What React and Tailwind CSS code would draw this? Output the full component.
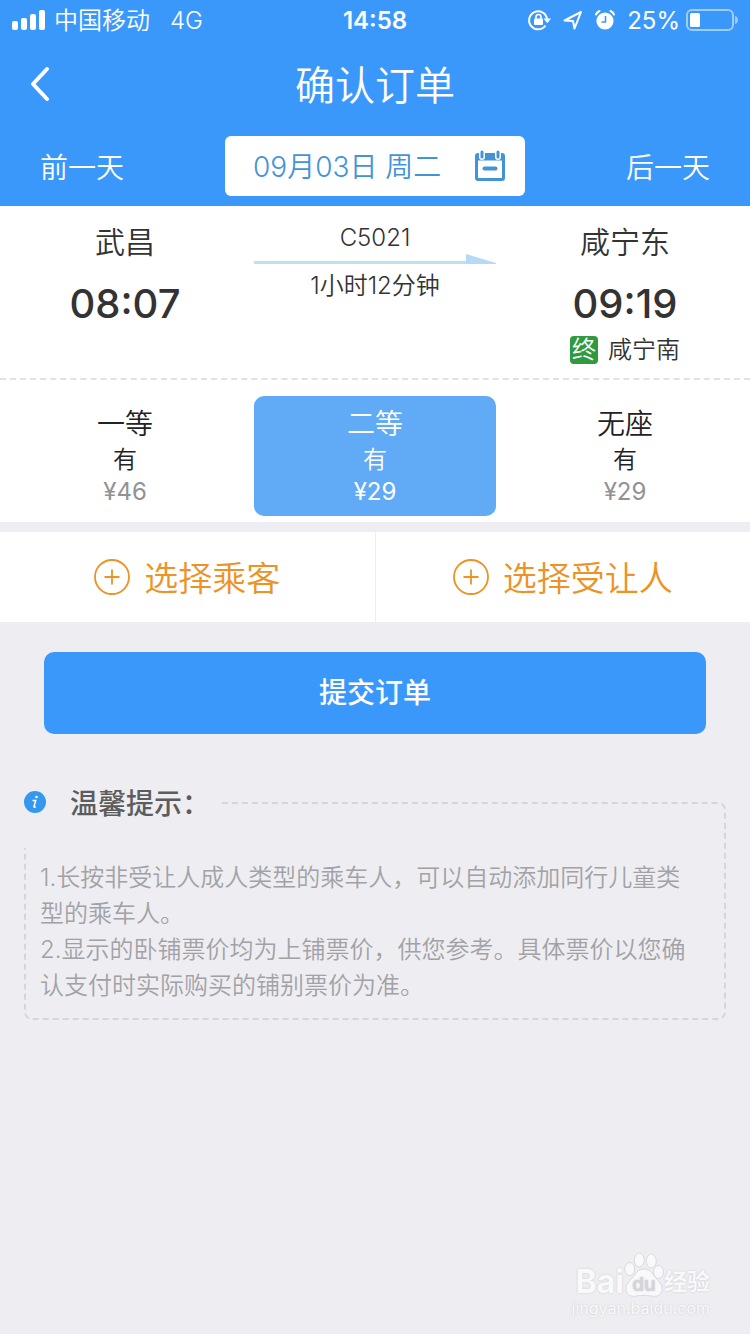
import { useState } from "react";
import clsx from "clsx";

const seats = [
  { name: "一等", left: "有", price: "¥46" },
  { name: "二等", left: "有", price: "¥29" },
  { name: "无座", left: "有", price: "¥29" },
];

const tips = [
  "1.长按非受让人成人类型的乘车人，可以自动添加同行儿童类型的乘车人。",
  "2.显示的卧铺票价均为上铺票价，供您参考。具体票价以您确认支付时实际购买的铺别票价为准。",
];

function StatusBar() {
  return (
    <div className="grid h-10 grid-cols-3 items-center px-3 text-2xl">
      <div className="flex items-center gap-2">
        <svg width="34" height="20" viewBox="0 0 34 20" fill="currentColor">
          <rect x="0" y="11" width="6" height="9" rx="2" />
          <rect x="9" y="8" width="6" height="12" rx="2" />
          <rect x="18" y="4" width="6" height="16" rx="2" />
          <rect x="27" y="0" width="6" height="20" rx="2" />
        </svg>
        <span className="pt-[2px] font-[350]">中国移动</span>
        <span className="ml-3 pt-[2px] font-[350]">4G</span>
      </div>
      <div className="pt-[2px] text-center font-semibold">14:58</div>
      <div className="flex items-center justify-end gap-3">
        {/* rotation lock */}
        <svg width="24" height="22" viewBox="0 0 24 22" fill="none" stroke="currentColor" strokeWidth="2">
          <path d="M18.5 16.5A9 9 0 1 1 20 10" />
          <path d="M16.5 9.5h7.5l-3.7 4.8z" fill="currentColor" stroke="none" />
          <rect x="7" y="9.5" width="9" height="6.5" rx="1" fill="currentColor" stroke="none" />
          <path d="M9 10V8a2.5 2.5 0 0 1 5 0v2" strokeWidth="1.6" />
        </svg>
        <svg width="20" height="20" viewBox="0 0 20 20" fill="none" stroke="currentColor" strokeWidth="2" strokeLinejoin="round">
          <path d="M1.5 10.5 18 2l-6.5 16.5-1.5-7.5z" />
        </svg>
        {/* alarm clock */}
        <svg width="20" height="20" viewBox="0 0 20 20" fill="none">
          <circle cx="10" cy="11" r="8.6" fill="currentColor" />
          <path d="M10.5 6v6H6.5" stroke="#3b98fb" strokeWidth="1.6" />
          <path d="M1 4.5A7 7 0 0 1 4.5 1M19 4.5A7 7 0 0 0 15.5 1" stroke="currentColor" strokeWidth="2" strokeLinecap="round" />
        </svg>
        <span className="flex items-center gap-[6px]">
          <span className="pt-[2px]">25%</span>
          <svg width="52" height="24" viewBox="0 0 52 24" fill="none">
            <rect x="1" y="2" width="46" height="20" rx="5" stroke="currentColor" strokeWidth="2" opacity="0.5" />
            <rect x="4" y="5" width="10" height="14" rx="1.5" fill="currentColor" />
            <path d="M49 8c4 1 4 7 0 8z" fill="currentColor" opacity="0.5" />
          </svg>
        </span>
      </div>
    </div>
  );
}

function CalendarIcon() {
  return (
    <svg width="30" height="32" viewBox="0 0 30 32" fill="none" stroke="currentColor">
      <rect x="1.5" y="4.5" width="27" height="25" rx="1.5" strokeWidth="3" />
      <path d="M1 7.5h28" strokeWidth="6" />
      <path d="M7 2v5M23 2v5" stroke="#fff" strokeWidth="6" strokeLinecap="round" />
      <path d="M7 2v5M23 2v5" strokeWidth="3" strokeLinecap="round" />
      <path d="M9.5 18.5h11" strokeWidth="4" strokeLinecap="round" />
    </svg>
  );
}

function AddButton({ children }) {
  return (
    <button type="button" className="flex h-[90px] flex-1 items-center justify-center gap-[14px] text-[34px] font-[350] text-[#ed9223]">
      <svg width="36" height="36" viewBox="0 0 36 36" fill="none" stroke="currentColor" strokeWidth="1.8">
        <circle cx="18" cy="18" r="17" />
        <path d="M10.5 18h15M18 10.5v15" />
      </svg>
      <span className="pt-[2px]">{children}</span>
    </button>
  );
}

function Watermark() {
  return (
    <div className="mt-auto flex flex-col items-end pr-10 pb-4 text-[#f9f9fb] [text-shadow:0_0_2px_#c4c4c9]">
      <div className="flex items-end">
        <span className="text-[32px] leading-8 font-bold">Bai</span>
        <svg width="40" height="46" viewBox="0 0 40 46" fill="currentColor" stroke="#d9d9de" strokeWidth="1">
          <path d="M20 17c6 0 8 4 11 8 4 5 8 8 7 13-1 6-6 7-11 6-5-1-9-1-14 0S3 44 2 38s3-8 7-13c3-4 5-8 11-8z" />
          <ellipse cx="5.7" cy="17" rx="5" ry="6.5" />
          <ellipse cx="15.3" cy="8" rx="5" ry="7" />
          <ellipse cx="27.3" cy="9" rx="5" ry="7" />
          <ellipse cx="34.5" cy="20" rx="5" ry="6.5" />
          <text x="20" y="39" textAnchor="middle" fontSize="19" fontWeight="600" fill="#d4d4d9" stroke="none">du</text>
        </svg>
        <span className="text-[23px] leading-8 font-bold">经验</span>
      </div>
      <span className="text-base leading-5">jingyan.baidu.com</span>
    </div>
  );
}

export default function App() {
  const [seat, setSeat] = useState(1);

  return (
    <div className="flex min-h-screen flex-col bg-[#eeeef2] font-['Inter','Noto_Sans_CJK_SC',sans-serif] text-[#333]">
      <header className="bg-[#3b98fb] pb-[10px] text-white">
        <StatusBar />
        <div className="grid h-24 grid-cols-[1fr_auto_1fr] items-center px-7 pb-2">
          <button type="button" aria-label="返回" className="justify-self-start">
            <svg width="24" height="36" viewBox="0 0 24 36" fill="none" stroke="currentColor" strokeWidth="4" strokeLinecap="round" strokeLinejoin="round">
              <path d="M19 3 5 18l14 15" />
            </svg>
          </button>
          <h1 className="pt-1 text-[40px] font-[350]">确认订单</h1>
        </div>
        <div className="flex items-center justify-between px-10 text-[28px] font-[350]">
          <button type="button" className="pt-1">前一天</button>
          <button type="button" className="flex h-[60px] w-[300px] items-center justify-between rounded-md bg-white pr-5 pl-7 text-[#4394d6]">
            <span className="pt-[2px]">09月03日 周二</span>
            <CalendarIcon />
          </button>
          <button type="button" className="pt-1">后一天</button>
        </div>
      </header>

      {/* Trip */}
      <section className="grid grid-cols-3 border-b-2 border-dashed border-[#e2e2e2] bg-white pt-3 pb-3 text-center">
        <div>
          <div className="text-[30px] leading-12 font-[350]">武昌</div>
          <div className="mt-[14px] text-[40px] leading-12 font-medium">08:07</div>
        </div>
        <div className="px-1 pt-1">
          <div className="text-2xl leading-8 font-[350]">C5021</div>
          <svg className="block h-4 w-full" viewBox="0 0 242 16" preserveAspectRatio="none">
            <path d="M0 7h212v3H0z" fill="#bfdff3" />
            <path d="M212 0l30 9v1h-30z" fill="#b5daf5" />
          </svg>
          <div className="text-2xl leading-8 font-[350]">1小时12分钟</div>
        </div>
        <div>
          <div className="text-[30px] leading-12 font-[350]">咸宁东</div>
          <div className="mt-[14px] text-[40px] leading-12 font-medium">09:19</div>
          <div className="mt-[6px] flex items-center justify-center gap-[10px] text-2xl leading-8 font-[350]">
            <span className="flex size-7 items-center justify-center rounded-sm bg-[#2f9a3f] text-white">终</span>
            咸宁南
          </div>
        </div>
      </section>

      {/* Seat class */}
      <section className="grid grid-cols-3 bg-white pt-4 pb-[6px]">
        {seats.map((s, i) => (
          <button
            key={s.name}
            type="button"
            aria-pressed={seat === i}
            onClick={() => setSeat(i)}
            className={clsx(
              "mx-1 flex h-[120px] flex-col items-center rounded-[10px] pt-2",
              seat === i ? "bg-[#60aaf6] text-white" : "text-[#222]"
            )}
          >
            <span className="text-[28px] leading-10 font-[350]">{s.name}</span>
            <span className="text-2xl leading-8 font-[350]">{s.left}</span>
            <span className={clsx("text-2xl leading-8", seat !== i && "text-[#929292]")}>{s.price}</span>
          </button>
        ))}
      </section>

      {/* Passengers */}
      <section className="mt-[10px] flex divide-x divide-[#eeeef2] bg-white">
        <AddButton>选择乘客</AddButton>
        <AddButton>选择受让人</AddButton>
      </section>

      <button type="button" className="mx-11 mt-[30px] h-[82px] rounded-[10px] bg-[#3b98fb] text-[28px] font-medium text-white">
        提交订单
      </button>

      {/* Tips: the heading covers the top left corner of the dashed frame */}
      <section className="relative mx-6 mt-[68px] rounded-lg border-2 border-dashed border-[#d5d5da] pt-14 pr-5 pb-[14px] pl-[14px]">
        <h2 className="absolute -top-6 -left-[2px] flex h-[68px] items-start gap-6 bg-[#eeeef2] pr-2 text-[28px] leading-12 font-medium text-[#5c5c5e]">
          <svg className="mt-[10px]" width="22" height="24" viewBox="0 0 22 24">
            <circle cx="11" cy="12" r="11" fill="#3498ee" />
            <path d="M8.5 10.5h3.2l-1.7 6q-.3 1.3 1.8.1" fill="none" stroke="#fff" strokeWidth="1.5" />
            <circle cx="12.5" cy="7" r="1.3" fill="#fff" />
          </svg>
          温馨提示：
        </h2>
        {tips.map((tip) => (
          <p key={tip} className="text-2xl leading-9 font-[350] text-[#a2a2a6]">{tip}</p>
        ))}
      </section>

      <Watermark />
    </div>
  );
}
